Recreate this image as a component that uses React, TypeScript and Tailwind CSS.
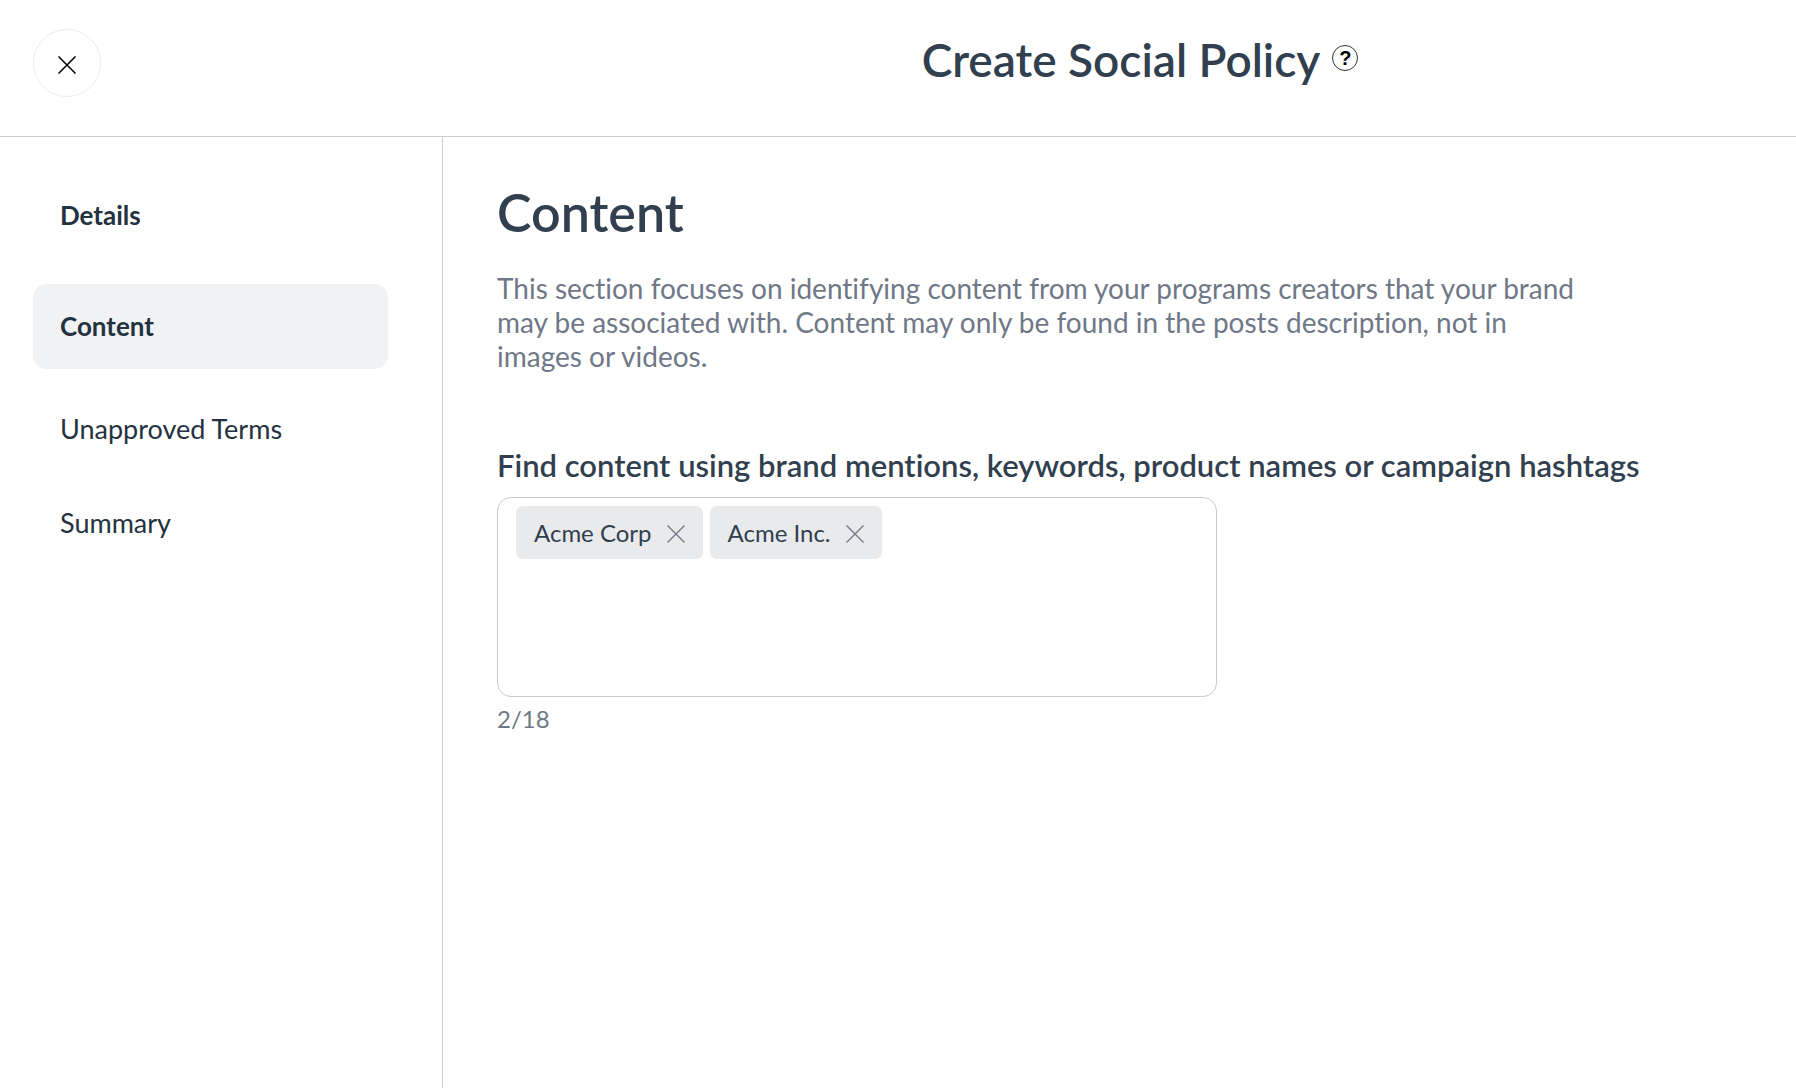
import React, { useState } from 'react';

const steps = [
  { name: 'Details', status: 'done' },
  { name: 'Content', status: 'active' },
  { name: 'Unapproved Terms', status: 'todo' },
  { name: 'Summary', status: 'todo' }
];

const MAX_TERMS = 18;

const stepStyles: Record<string, string> = {
  done: 'h-[85px] text-[26px] font-bold',
  active: 'h-[85px] text-[26px] font-bold bg-[#f1f2f4]',
  todo: 'h-[68px] text-[27px] font-normal'
};

const CrossIcon: React.FC<{ className: string }> = ({ className }) => (
  <svg viewBox="0 0 18 18" fill="none" stroke="currentColor" className={className} aria-hidden="true">
    <path d="M0.5 0.5 L17.5 17.5 M17.5 0.5 L0.5 17.5" />
  </svg>
);

const Header: React.FC = () => (
  <header className="flex h-[137px] shrink-0 border-b border-[#cccccc]">
    <div className="w-[484px] shrink-0 pl-[33px] pt-[29px]">
      <button
        type="button"
        aria-label="Close"
        className="flex h-[68px] w-[68px] items-center justify-center rounded-full border border-[#ebebeb] pt-1 text-black"
      >
        <CrossIcon className="h-[18px] w-[18px] stroke-[1.5]" />
      </button>
    </div>
    <div className="flex flex-1 items-start justify-center gap-3 pt-8">
      <h1 className="text-[46px] leading-[56px] font-semibold">Create Social Policy</h1>
      <button
        type="button"
        aria-label="Help"
        className="mt-[13px] flex h-[26px] w-[26px] items-center justify-center rounded-full border border-[#333333] font-['Liberation_Sans',sans-serif] text-[20px] leading-none font-bold text-black"
      >
        ?
      </button>
    </div>
  </header>
);

const Sidebar: React.FC = () => (
  <nav className="w-[443px] shrink-0 border-r border-[#cccccc] pt-9 pr-[54px] pl-[33px]">
    <ul className="flex flex-col gap-[26px]">
      {steps.map(step => (
        <li key={step.name}>
          <a
            href="#"
            className={`flex items-center rounded-[14px] pl-[27px] text-[#243240] ${stepStyles[step.status]}`}
          >
            {step.name}
          </a>
        </li>
      ))}
    </ul>
  </nav>
);

const TermsField: React.FC = () => {
  const [terms, setTerms] = useState(['Acme Corp', 'Acme Inc.']);
  const [draft, setDraft] = useState('');

  const handleKeyDown = (e: React.KeyboardEvent) => {
    if (e.key === 'Enter' && draft.trim() && terms.length < MAX_TERMS) {
      setTerms([...terms, draft.trim()]);
      setDraft('');
    }
  };

  return (
    <div>
      <label htmlFor="terms" className="block text-[31px] leading-[36px] font-semibold">
        Find content using brand mentions, keywords, product names or campaign hashtags
      </label>
      <div className="mt-[14px] flex min-h-[200px] max-w-[720px] flex-wrap content-start gap-[7px] rounded-[14px] border border-[#c9cacf] px-[18px] py-2">
        {terms.map(term => (
          <span key={term} className="flex h-[53px] items-center gap-[15px] rounded-[7px] bg-[#e9eaeb] px-[18px] text-[24px]">
            {term}
            <button
              type="button"
              aria-label={`Remove ${term}`}
              className="pt-0.5 text-[#6f7887]"
              onClick={() => setTerms(terms.filter(t => t !== term))}
            >
              <CrossIcon className="h-[18px] w-[18px] stroke-[1.25]" />
            </button>
          </span>
        ))}
        <input
          id="terms"
          type="text"
          value={draft}
          onChange={e => setDraft(e.target.value)}
          onKeyDown={handleKeyDown}
          className="h-[53px] min-w-0 flex-1 text-[24px] outline-none"
        />
      </div>
      <p className="mt-1 text-[24px] leading-[36px] text-[#6f7887]">{terms.length}/{MAX_TERMS}</p>
    </div>
  );
};

const App: React.FC = () => (
  <div className="flex min-h-screen flex-col bg-white font-['Lato',sans-serif] text-[#313f4f] [font-variant-ligatures:none]">
    <Header />
    <div className="flex flex-1">
      <Sidebar />
      <main className="min-w-0 flex-1 pt-[43px] pr-10 pl-[54px]">
        <h2 className="text-[52px] leading-[64px] font-semibold">Content</h2>
        <p className="mt-[27px] mb-[74px] max-w-[1100px] text-[28px] leading-[34px] text-[#6f7887]">
          This section focuses on identifying content from your programs creators that your brand may be associated
          with. Content may only be found in the posts description, not in images or videos.
        </p>
        <TermsField />
      </main>
    </div>
  </div>
);

export default App;
